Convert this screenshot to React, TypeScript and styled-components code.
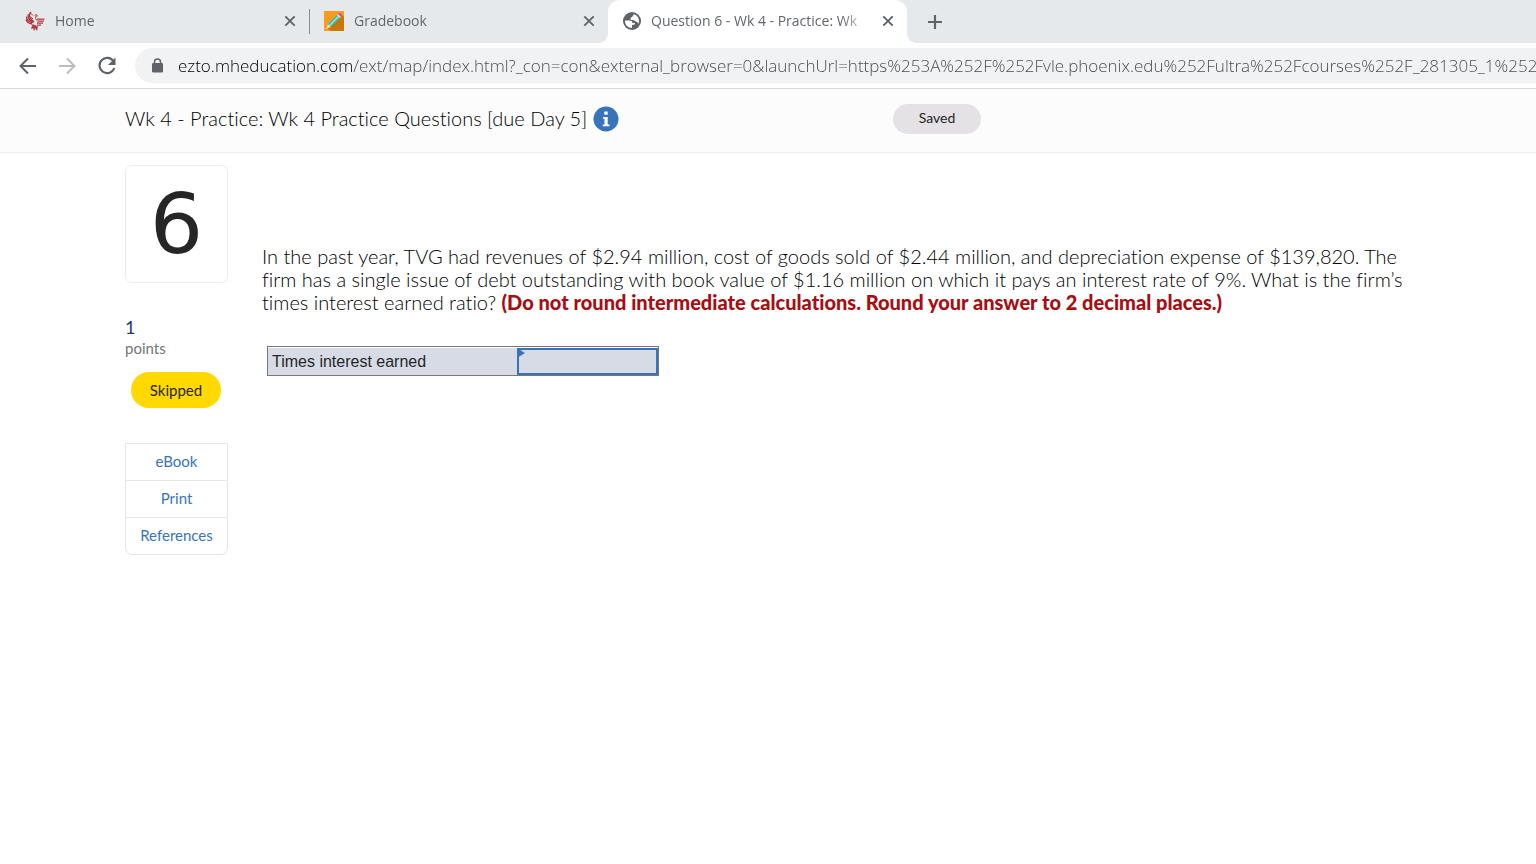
import React from "react";
import styled, { createGlobalStyle } from "styled-components";

const GlobalStyle = createGlobalStyle`
  *, *::before, *::after { box-sizing: border-box; }
  body { margin: 0; background: #fff; overflow-x: hidden; }
  button, input { font: inherit; }
  p, h1 { margin: 0; font-weight: 400; }
`;

const chromeFont = `"Open Sans", "Noto Sans", sans-serif`;
const pageFont = `Lato, "Open Sans", sans-serif`;

const Page = styled.div`
  min-height: 100vh;
  color: #262626;
  font-family: ${pageFont};
  font-variant-ligatures: none;
`;

const TabStrip = styled.div`
  display: flex;
  height: 43px;
  padding-left: 10px;
  overflow: hidden;
  background: #e6e9ec;
  font-family: ${chromeFont};
`;

const Tab = styled.div<{ $active?: boolean; $divided?: boolean }>`
  position: relative;
  display: flex;
  align-items: center;
  flex: 0 1 299px;
  min-width: 0;
  padding: 0 13px 1px 15px;
  background: ${(p) => (p.$active ? "#fff" : "transparent")};
  border-radius: 12px 12px 0 0;

  &::before {
    content: "";
    position: absolute;
    right: 100%;
    bottom: 0;
    width: 10px;
    height: 10px;
    display: ${(p) => (p.$active ? "block" : "none")};
    background: radial-gradient(circle at 0 0, transparent 10px, #fff 10px);
  }

  &::after {
    content: "";
    position: absolute;
    ${(p) =>
      p.$active
        ? `left: 100%; bottom: 0; width: 10px; height: 10px;
           background: radial-gradient(circle at 100% 0, transparent 10px, #fff 10px);`
        : `left: 100%; top: 9px; height: 25px; width: 1px;
           background: ${p.$divided ? "#8a8d91" : "transparent"};`}
  }
`;

const TabTitle = styled.span`
  flex: 1;
  min-width: 0;
  margin: 0 12px 0 10px;
  overflow: hidden;
  white-space: nowrap;
  color: #63676b;
  font-size: 14px;
  line-height: 20px;
  mask-image: linear-gradient(to left, transparent, #000 28px);
`;

const IconButton = styled.button<{ $faded?: boolean }>`
  display: flex;
  align-items: center;
  justify-content: center;
  flex: none;
  padding: 0;
  border: 0;
  background: none;
  color: ${(p) => (p.$faded ? "#babcbe" : "#5f6368")};
  cursor: pointer;
`;

const NewTab = styled(IconButton)`
  width: 56px;
`;

const Toolbar = styled.div`
  display: flex;
  align-items: center;
  height: 46px;
  padding-left: 16px;
  border-bottom: 1px solid #d9dadb;
  font-family: ${chromeFont};
`;

const NavButtons = styled.div`
  display: flex;
  flex: none;
  gap: 15px;
  margin-right: 15px;
`;

const AddressBar = styled.label`
  display: flex;
  align-items: center;
  flex: 1;
  min-width: 0;
  height: 35px;
  padding-left: 16px;
  gap: 14px;
  overflow: hidden;
  border-radius: 18px 0 0 18px;
  background: #f1f2f4;
  color: #5f6368;
`;

const AddressInput = styled.input`
  flex: 1;
  min-width: 0;
  padding: 0;
  border: 0;
  outline: 0;
  font-size: 17px;
  font-weight: 300;
  line-height: 24px;
  background: linear-gradient(90deg, #000 175px, #44484c 175px);
  background-clip: text;
  -webkit-background-clip: text;
  -webkit-text-fill-color: transparent;
`;

const Header = styled.header`
  display: grid;
  grid-template-columns: 768px 1fr;
  align-items: center;
  height: 64px;
  padding: 0 125px 4px;
  border-bottom: 1px solid #eee;
  background: #fcfcfc;
`;

const TitleGroup = styled.div`
  display: flex;
  align-items: center;
  gap: 6px;
`;

const Title = styled.h1`
  padding-bottom: 2px;
  color: #000;
  font-size: 20px;
  font-weight: 300;
  line-height: 24px;
  white-space: nowrap;
`;

const Saved = styled.span`
  justify-self: start;
  width: 88px;
  height: 30px;
  border-radius: 15px;
  background: #e4e2e5;
  font-size: 14px;
  line-height: 28px;
  text-align: center;
`;

const Content = styled.main`
  display: flex;
  align-items: flex-start;
  gap: 34px;
  padding: 12px 115px 40px 125px;
`;

const Side = styled.aside`
  display: flex;
  flex-direction: column;
  flex: none;
  width: 103px;
`;

const NumberBox = styled.div`
  height: 118px;
  margin-bottom: 33px;
  border: 1px solid #ececec;
  border-radius: 7px;
  font-family: "DejaVu Sans", sans-serif;
  font-size: 84px;
  line-height: 116px;
  text-align: center;
`;

const PointCount = styled.div`
  color: #1e3c72;
  font-size: 18px;
  line-height: 22px;
`;

const PointLabel = styled.div`
  color: #757575;
  font-size: 15px;
  line-height: 20px;
`;

const Skipped = styled.span`
  width: 90px;
  margin: 14px 0 35px 6px;
  border-radius: 18px;
  background: #ffd900;
  font-size: 15px;
  line-height: 36px;
  text-align: center;
`;

const LinkList = styled.nav`
  display: flex;
  flex-direction: column;
  border: 1px solid #e6e6e6;
  border-radius: 0 0 7px 7px;
`;

const SideLink = styled.a`
  padding-bottom: 1px;
  color: #3a74b8;
  font-size: 15px;
  line-height: 35px;
  text-align: center;
  text-decoration: none;

  & + & {
    border-top: 1px solid #e6e6e6;
  }
`;

const Question = styled.section`
  flex: 1;
  min-width: 0;
  padding-top: 80px;
`;

const Prompt = styled.p`
  margin-bottom: 32px;
  color: #000;
  font-size: 20px;
  font-weight: 300;
  line-height: 23px;
`;

const Hint = styled.strong`
  color: #a80d12;
  font-weight: 900;
`;

const AnswerTable = styled.table`
  margin-left: 5px;
  border: 1px solid #777;
  border-collapse: separate;
  border-spacing: 0;
  font-family: "Liberation Sans", Arial, sans-serif;
`;

const LabelCell = styled.th`
  width: 249px;
  height: 28px;
  padding: 0 4px;
  border-top: 1px solid #fff;
  background: #d7dbe6;
  font-size: 16px;
  font-weight: 400;
  line-height: 20px;
  text-align: left;
`;

const InputCell = styled.td`
  position: relative;
  width: 141px;
  padding: 0;
  border-top: 1px solid #fff;
`;

const Marker = styled.svg`
  position: absolute;
  top: 0;
  left: 0;
`;

const AnswerInput = styled.input`
  display: block;
  width: 100%;
  height: 27px;
  padding: 0 8px;
  border: 2px solid #3b73b9;
  border-radius: 0;
  outline: 0;
  background: #d7dbe6;
`;

const PhoenixIcon = () => (
  <svg width="20" height="20" viewBox="0 0 20 20" aria-hidden="true" fill="none" stroke="#b5363b">
    <path d="M6 1C4 3 4 6 6 8l3 3M3.500 3c-1 2 0 5 2 6.500l3 2M1.500 5.500c0 2.500 1.500 4.500 4 5.500l2 .8M1 8.500c.7 2.500 3 4 6 4.500" strokeWidth="1.300" />
    <path d="M12 8.200h7.500M12.500 10.200H19M12 12.200h6M12 14.200h4" strokeWidth="1.200" />
    <path d="M5 1.500l3 3M4 5l4 3" strokeWidth="1" />
    <path d="M9.500 4.500l1.500-1 1.500 1.300-1.500.3-.5 2.400 1.500 2" strokeWidth="1" />
    <path d="M7.500 13.500l3 1 2 1-.5 4-2-2.500-1 2.500-.5-2.700-2 1z" fill="#b5363b" strokeWidth=".5" />
  </svg>
);

const PencilIcon = () => (
  <svg width="20" height="20" viewBox="0 0 20 20" aria-hidden="true">
    <path fill="#f99b1c" d="M0 0h20v20H0z" />
    <path fill="#c97703" d="M17.500 3.500L20 6v14H7l-4-3z" />
    <path fill="#f7e3c2" d="M4 13l3 3-4.500 1.500z" />
    <path fill="#39b8ad" d="M4 13l9-9 3 3-9 9z" />
    <path fill="#8ff0dc" d="M5 14l9-9 1 1-9 9z" />
    <path fill="#e8e8ee" d="M13 4l1-1 3 3-1 1z" />
    <path fill="#b55bb8" d="M14 3l1-1q1-.5 2 .5t.8 2.200L17 6z" />
    <path stroke="#ffc266" strokeWidth=".8" d="M0 17.500h4" />
  </svg>
);

const GlobeIcon = () => (
  <svg width="18" height="18" viewBox="0 0 18 18" aria-hidden="true">
    <circle cx="9" cy="9" r="9" fill="#5f6368" />
    <path
      fill="#fff"
      d="M2 8.500h4.500c2 0 3 1 3 2.500h2c.8 0 .8 1.200 0 1.500L9 13v3c-4 0-7-3-7-7zM11 2.300c3 .9 5 3.500 5 6.700 0 1-.2 2-.6 2.800-.6-.8-1.200-2.300-2.400-2.300-1.200 0-1.500-1.500-3-1.500-1.200 0-2.500.2-2.500-1.300S9 5.500 9.500 4.500c.3-.8 1-1.400 1.500-2.200z"
    />
  </svg>
);

const CloseIcon = () => (
  <svg width="12" height="12" viewBox="0 0 12 12" aria-hidden="true">
    <path d="M1.300 1.300l9.400 9.400M10.700 1.300l-9.400 9.400" stroke="currentColor" strokeWidth="1.900" />
  </svg>
);

const ArrowIcon = ({ flip }: { flip?: boolean }) => (
  <svg width="24" height="24" viewBox="0 0 24 24" fill="none" stroke="currentColor" strokeWidth="2" aria-hidden="true">
    <path d={flip ? "M4 12h15M12 4.500l7.500 7.500-7.500 7.500" : "M20 12H5M12 4.500L4.500 12l7.500 7.500"} />
  </svg>
);

const ReloadIcon = () => (
  <svg width="26" height="24" viewBox="0 0 26 24" aria-hidden="true">
    <path d="M19.400 7.200A7.600 7.600 0 1 0 20.300 14" fill="none" stroke="currentColor" strokeWidth="2.100" />
    <path d="M21.500 3.500V11H14z" fill="currentColor" />
  </svg>
);

const LockIcon = () => (
  <svg width="13" height="15" viewBox="0 0 13 15" aria-hidden="true">
    <rect x="1" y="5" width="11" height="9.500" rx="1.300" fill="currentColor" />
    <path d="M3.500 5.500V4a3 3 0 0 1 6 0v1.500" fill="none" stroke="currentColor" strokeWidth="1.500" />
  </svg>
);

const InfoIcon = () => (
  <svg width="26" height="26" viewBox="0 0 26 26" aria-hidden="true">
    <circle cx="13" cy="13" r="12.500" fill="#3874ba" />
    <path fill="#fff" d="M11.300 5.500h3.400v3.300h-3.400zM10 11h4.700v7.500h1.800v1.800H9.800v-1.800h1.700v-5.700H10z" />
  </svg>
);

const tabs = [
  { title: "Home", icon: <PhoenixIcon />, divided: true },
  { title: "Gradebook", icon: <PencilIcon /> },
  { title: "Question 6 - Wk 4 - Practice: Wk", icon: <GlobeIcon />, active: true },
];

const links = ["eBook", "Print", "References"];

const address =
  "ezto.mheducation.com/ext/map/index.html?_con=con&external_browser=0&launchUrl=https%253A%252F%252Fvle.phoenix.edu%252Fultra%252Fcourses%252F_281305_1%252Foutline";

export default function App() {
  return (
    <Page>
      <GlobalStyle />
      <TabStrip>
        {tabs.map((tab) => (
          <Tab key={tab.title} $active={tab.active} $divided={tab.divided}>
            {tab.icon}
            <TabTitle>{tab.title}</TabTitle>
            <IconButton aria-label={`Close ${tab.title}`}>
              <CloseIcon />
            </IconButton>
          </Tab>
        ))}
        <NewTab aria-label="New tab">
          <svg width="16" height="16" viewBox="0 0 16 16" aria-hidden="true">
            <path d="M8 1v14M1 8h14" stroke="currentColor" strokeWidth="2.200" />
          </svg>
        </NewTab>
      </TabStrip>
      <Toolbar>
        <NavButtons>
          <IconButton aria-label="Back"><ArrowIcon /></IconButton>
          <IconButton aria-label="Forward" $faded><ArrowIcon flip /></IconButton>
          <IconButton aria-label="Reload"><ReloadIcon /></IconButton>
        </NavButtons>
        <AddressBar>
          <LockIcon />
          <AddressInput aria-label="Address" defaultValue={address} spellCheck={false} />
        </AddressBar>
      </Toolbar>
      <Header>
        <TitleGroup>
          <Title>Wk 4 - Practice: Wk 4 Practice Questions [due Day 5]</Title>
          <IconButton aria-label="Assignment information"><InfoIcon /></IconButton>
        </TitleGroup>
        <Saved>Saved</Saved>
      </Header>
      <Content>
        <Side>
          <NumberBox>6</NumberBox>
          <PointCount>1</PointCount>
          <PointLabel>points</PointLabel>
          <Skipped>Skipped</Skipped>
          <LinkList>
            {links.map((link) => (
              <SideLink key={link} href="#">{link}</SideLink>
            ))}
          </LinkList>
        </Side>
        <Question>
          <Prompt>
            In the past year, TVG had revenues of $2.94 million, cost of goods sold of $2.44 million, and depreciation
            expense of $139,820. The firm has a single issue of debt outstanding with book value of $1.16 million on
            which it pays an interest rate of 9%. What is the firm’s times interest earned ratio?{" "}
            <Hint>(Do not round intermediate calculations. Round your answer to 2 decimal places.)</Hint>
          </Prompt>
          <AnswerTable>
            <tbody>
              <tr>
                <LabelCell scope="row">
                  <label htmlFor="times-interest">Times interest earned</label>
                </LabelCell>
                <InputCell>
                  <AnswerInput id="times-interest" type="text" />
                  <Marker width="8" height="10" viewBox="0 0 8 10" aria-hidden="true">
                    <path d="M0 0l8 5-8 5z" fill="#3b73b9" />
                  </Marker>
                </InputCell>
              </tr>
            </tbody>
          </AnswerTable>
        </Question>
      </Content>
    </Page>
  );
}
